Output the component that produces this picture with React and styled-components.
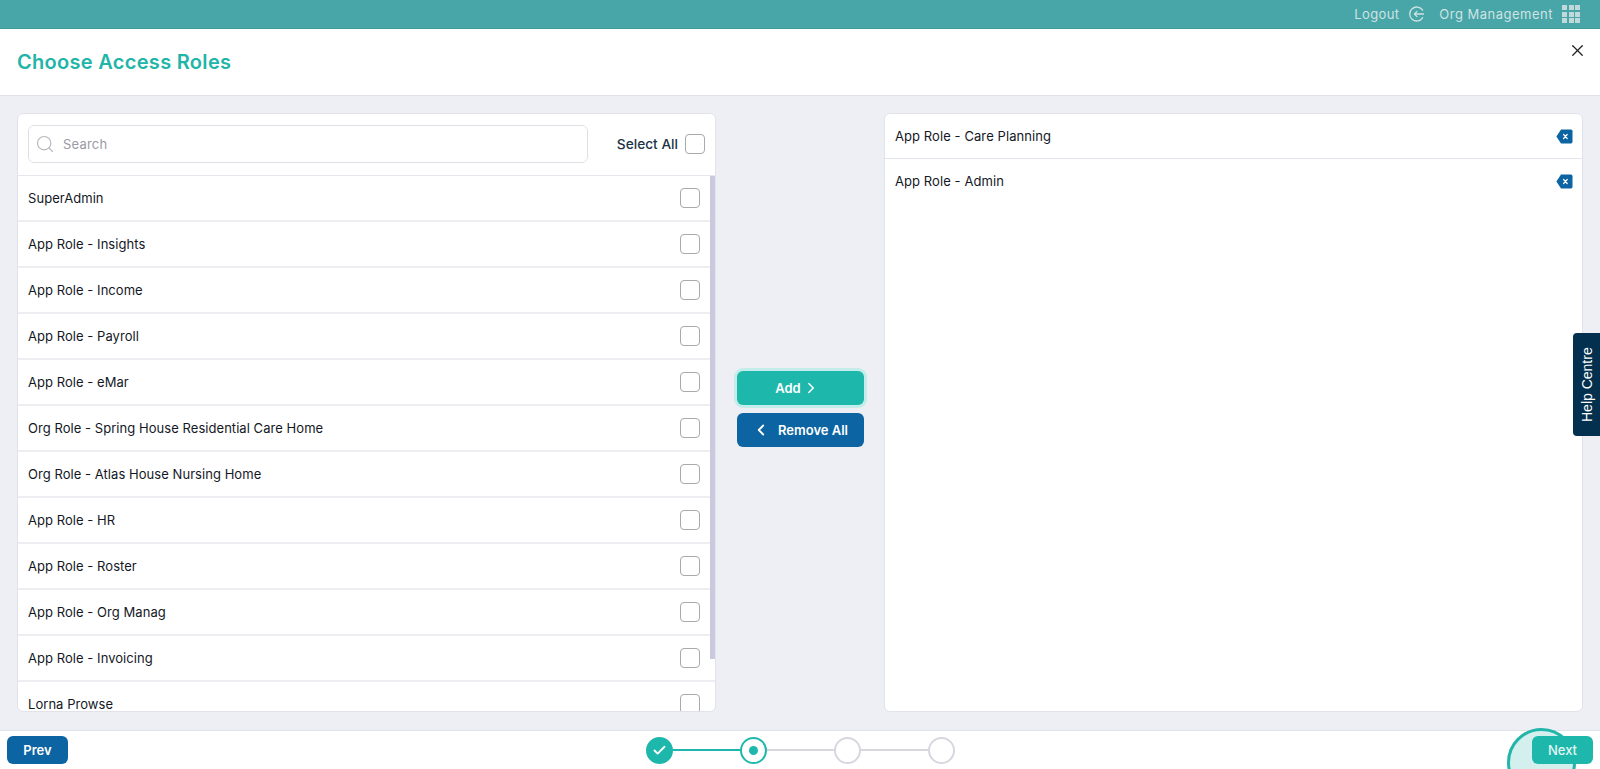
import React from 'react'
import styled, { createGlobalStyle } from 'styled-components'
import { X, Search, ChevronRight, ChevronLeft, Check } from 'lucide-react'

const Global = createGlobalStyle`
  html, body { margin: 0; padding: 0; height: 100%; overflow: hidden; }
  body { font-family: Inter, "Open Sans", sans-serif; background: #fff; color: #14181f; }
  * { box-sizing: border-box; }
  input::placeholder { color: #9a9aa6; }
`
const Page = styled.div`
  position: relative;
  width: 1600px;
  height: 769px;
  display: flex;
  flex-direction: column;
  overflow: hidden;
`
const TopBar = styled.div`
  height: 29px;
  flex: none;
  background: #48a5a8;
  border-bottom: 1px solid #3f9b9e;
  display: flex;
  align-items: center;
  justify-content: flex-end;
  padding-right: 20px;
  color: #cfe3e3;
  font-size: 13px;
`
const TopLink = styled.span`
  display: flex;
  align-items: center;
  gap: ${p => p.gap}px;
  margin-left: ${p => p.ml}px;
  letter-spacing: ${p => p.ls}px;
`
const GridIcon = styled.span`
  display: grid;
  grid-template-columns: repeat(3, 5px);
  grid-auto-rows: 5px;
  gap: 1.5px;
  i { background: #c0d9da; display: block; }
`
const Header = styled.div`
  height: 67px;
  flex: none;
  display: flex;
  align-items: center;
  justify-content: space-between;
  position: relative;
  padding-left: 17px;
  border-bottom: 1px solid #e1e2e8;
`
const Title = styled.h1`
  margin: 0;
  color: #1fb5a8;
  font-size: 20px;
  font-weight: 600;
  letter-spacing: 0.3px;
`
const CloseBtn = styled.button`
  position: absolute;
  top: 12px;
  right: 13px;
  padding: 0;
  border: none;
  background: none;
  display: flex;
  color: #222;
`
const Body = styled.div`
  flex: 1;
  min-height: 0;
  background: #eeeff5;
  display: flex;
  padding: 17px 17px 18px;
`
const Panel = styled.div`
  position: relative;
  width: 699px;
  flex: none;
  background: #fff;
  border: 1px solid #e2e3ea;
  border-radius: 6px;
  display: flex;
  flex-direction: column;
  overflow: hidden;
`
const SearchRow = styled.div`
  height: 62px;
  flex: none;
  display: flex;
  align-items: center;
  padding: 0 10px 2px;
  border-bottom: 1px solid #e6e7ec;
`
const SearchBox = styled.label`
  width: 560px;
  height: 38px;
  border: 1px solid #dfe0e6;
  border-radius: 6px;
  display: flex;
  align-items: center;
  gap: 8px;
  padding-left: 6px;
  color: #b5b5bb;
`
const SearchInput = styled.input`
  flex: 1;
  min-width: 0;
  border: none;
  outline: none;
  background: none;
  padding: 0;
  font: inherit;
  font-size: 13px;
  letter-spacing: 0.2px;
`
const SelectAll = styled.label`
  margin-left: auto;
  display: flex;
  align-items: center;
  gap: 7px;
  font-size: 13.7px;
  font-weight: 500;
  color: #1c3346;
`
const Box = styled.span`
  width: 20px;
  height: 20px;
  flex: none;
  border: 1px solid #a9a9ae;
  border-radius: 4px;
  background: #fff;
`
const ListWrap = styled.div`
  position: relative;
  flex: 1;
  min-height: 0;
  overflow: hidden;
`
const Row = styled.div`
  height: 46px;
  display: flex;
  align-items: center;
  justify-content: space-between;
  padding: 0 15px 0 10px;
  border-bottom: 2px solid #eeeef2;
  font-size: 13px;
  letter-spacing: 0.05px;
`
const Thumb = styled.span`
  position: absolute;
  top: 0;
  right: 0;
  width: 5px;
  height: 483px;
  background: #c9cae0;
`
const Middle = styled.div`
  flex: 1;
  display: flex;
  flex-direction: column;
  align-items: center;
  justify-content: center;
  gap: 8px;
  padding-bottom: 7px;
`
const MoveBtn = styled.button`
  width: 127px;
  height: 34px;
  padding: 0 ${p => p.primary ? 5 : 0}px 0 0;
  border: none;
  border-radius: 6px;
  color: #fff;
  background: ${p => p.primary ? '#1db8ab' : '#0c64a3'};
  box-shadow: ${p => p.primary ? '0 0 0 3px #c4ecea' : 'none'};
  font: inherit;
  font-size: 13px;
  font-weight: 600;
  display: flex;
  align-items: center;
  justify-content: center;
  gap: ${p => p.primary ? 1 : 8}px;
`
const RightRow = styled.div`
  height: ${p => p.last ? 44 : 45}px;
  flex: none;
  display: flex;
  align-items: center;
  justify-content: space-between;
  padding: 0 9px 0 10px;
  font-size: 13px;
  letter-spacing: 0.08px;
  border-bottom: ${p => p.last ? 'none' : '1px solid #e4e5ea'};
`
const Footer = styled.div`
  height: 39px;
  flex: none;
  border-top: 1px solid #e1e2e8;
  position: relative;
  display: flex;
  align-items: center;
  justify-content: space-between;
  padding: 0 7px;
`
const NavBtn = styled.button`
  position: relative;
  width: ${p => p.w}px;
  height: 28px;
  padding: 0;
  border: none;
  border-radius: 6px;
  color: ${p => p.next ? '#e4f6f4' : '#fff'};
  background: ${p => p.next ? '#1db8ab' : '#0c64a3'};
  font: inherit;
  font-size: 13px;
  font-weight: ${p => p.next ? 500 : 600};
`
const Steps = styled.div`
  display: flex;
  align-items: center;
`
const Step = styled.span`
  width: 27px;
  height: 27px;
  border-radius: 50%;
  flex: none;
  display: flex;
  align-items: center;
  justify-content: center;
  color: #fff;
  background: ${p => p.state === 'done' ? '#1db8ab' : '#fff'};
  border: 2px solid ${p => p.state ? '#1db8ab' : '#d6d7df'};
`
const Dot = styled.span`
  width: 9px;
  height: 9px;
  border-radius: 50%;
  background: #1db8ab;
`
const Line = styled.span`
  width: 67px;
  height: 2px;
  background: ${p => p.on ? '#1db8ab' : '#d6d7df'};
`
const Pulse = styled.span`
  position: absolute;
  left: 1507px;
  top: -3px;
  width: 69px;
  height: 69px;
  border-radius: 50%;
  border: 3px solid #22b5a9;
  background: #d3f0ee;
`
const Help = styled.div`
  position: absolute;
  right: 0;
  top: 333px;
  width: 27px;
  height: 103px;
  background: #04304f;
  color: #fff;
  font-family: "Liberation Sans", Arial, sans-serif;
  font-size: 14px;
  display: flex;
  align-items: center;
  justify-content: center;
  writing-mode: vertical-rl;
  transform: rotate(180deg);
  border-radius: 0 4px 4px 0;
`

const LogoutIcon = () => (
  <svg width="16" height="16" viewBox="0 0 16 16" fill="none" stroke="#cfe3e3" strokeWidth="1.3" strokeLinecap="round" strokeLinejoin="round">
    <path d="M13.6 4.2A7 7 0 1 0 13.6 11.8" />
    <path d="M14.5 8H5.5M8 5.4 5.4 8 8 10.6" />
  </svg>
)

const RemoveIcon = () => (
  <svg width="17" height="15" viewBox="0 0 17 14" preserveAspectRatio="none">
    <path d="M5 .5h10a1.5 1.5 0 0 1 1.5 1.5v10a1.5 1.5 0 0 1-1.5 1.5H5L.4 7z" fill="#0c64a3" />
    <path d="M7.6 5.1l3.6 3.8M11.2 5.1 7.6 8.9" stroke="#fff" strokeWidth="1.2" strokeLinecap="round" />
  </svg>
)

const roles = [
  'SuperAdmin',
  'App Role - Insights',
  'App Role - Income',
  'App Role - Payroll',
  'App Role - eMar',
  'Org Role - Spring House Residential Care Home',
  'Org Role - Atlas House Nursing Home',
  'App Role - HR',
  'App Role - Roster',
  'App Role - Org Manag',
  'App Role - Invoicing',
  'Lorna Prowse',
]

export default function App() {
  return (
    <Page>
      <Global />
      <TopBar>
        <TopLink gap={10} ml={0} ls={0.35}>Logout <LogoutIcon /></TopLink>
        <TopLink gap={9} ml={14} ls={0.5}>
          Org Management
          <GridIcon>{Array.from({ length: 9 }, (_, i) => <i key={i} />)}</GridIcon>
        </TopLink>
      </TopBar>
      <Header>
        <Title>Choose Access Roles</Title>
        <CloseBtn><X size={19} strokeWidth={1.6} /></CloseBtn>
      </Header>
      <Body>
        <Panel>
          <SearchRow>
            <SearchBox>
              <Search size={20} strokeWidth={1.4} />
              <SearchInput placeholder="Search" />
            </SearchBox>
            <SelectAll>Select All <Box /></SelectAll>
          </SearchRow>
          <ListWrap>
            {roles.map(r => <Row key={r}>{r}<Box /></Row>)}
            <Thumb />
          </ListWrap>
        </Panel>
        <Middle>
          <MoveBtn primary>Add <ChevronRight size={18} strokeWidth={2} /></MoveBtn>
          <MoveBtn><ChevronLeft size={18} strokeWidth={2.4} /> Remove All</MoveBtn>
        </Middle>
        <Panel>
          <RightRow>App Role - Care Planning <RemoveIcon /></RightRow>
          <RightRow last>App Role - Admin <RemoveIcon /></RightRow>
        </Panel>
      </Body>
      <Footer>
        <NavBtn w={61}>Prev</NavBtn>
        <Steps>
          <Step state="done"><Check size={15} strokeWidth={3} /></Step>
          <Line on />
          <Step state="active"><Dot /></Step>
          <Line />
          <Step />
          <Line />
          <Step />
        </Steps>
        <Pulse />
        <NavBtn w={61} next>Next</NavBtn>
      </Footer>
      <Help>Help Centre</Help>
    </Page>
  )
}
